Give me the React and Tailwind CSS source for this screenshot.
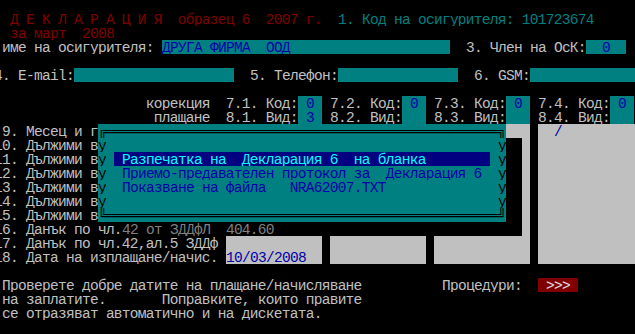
const K = 'bg-black text-[#c0c0c0]';
const R = 'bg-black text-[#800000]';
const T = 'bg-black text-[#008080]';
const F = 'bg-[#008080] text-[#0000a8]';
const G = 'bg-[#c0c0c0] text-[#0000a8]';
const P = 'bg-[#008080] text-black';
const PT = 'bg-[#008080] text-[#0000a8]';
const H = 'bg-[#000080] text-[#00ffff]';
const S = 'bg-black text-[#808080]';
const B = 'bg-[#800000] text-[#e0e0e0]';

const COLS = 81;
const sp = (n) => ' '.repeat(n);

// right side behind the popup: shadow, gray C tail, gap, gray D
const popupRight = [['', K, 2], ['', G, 1], ['', K, 1], ['', G, 13]];

const popupRow = (label, inner) => [[label, K], ['у', P], ...inner, ['у', P], ...popupRight];

const rows = [
  [],
  [['  Д Е К Л А Р А Ц И Я  образец 6  2007 г.  ', R], ['1. Код на осигурителя: 101723674', T]],
  [['  за март  2008', R]],
  [[' име на осигурителя: ', K], ['ДРУГА ФИРМА  ООД', F, 36], ['  3. Член на ОсК:', K], ['  0', F, 5]],
  [],
  [['4. E-mail:', K], ['', F, 20], ['  5. Телефон:', K], ['', F, 15], ['  6. GSM:', K], ['', F, 14]],
  [],
  [
    [sp(19) + 'корекция  7.1. Код:', K], [' 0', F, 3],
    [' 7.2. Код:', K], [' 0', F, 3],
    [' 7.3. Код:', K], [' 0', F, 3],
    [' 7.4. Код:', K], [' 0', F, 3],
  ],
  [
    [sp(20) + 'плащане  8.1. Вид:', K], [' 3', F, 3],
    [' 8.2. Вид:', K], ['', F, 3],
    [' 8.3. Вид:', K], ['', F, 3],
    [' 8.4. Вид:', K], ['', F, 3],
  ],
  [[' 9. Месец и г', K], ['╔' + '═'.repeat(49) + '╗', P], ['', G, 3], ['', K, 1], ['  /', G, 13]],
  popupRow('10. Дължими в', [['', PT, 49]]),
  popupRow('11. Дължими в', [[' ', PT], [' Разпечатка на  Декларация 6  на бланка', H, 47], [' ', PT]]),
  popupRow('12. Дължими в', [['  Приемо-предавателен протокол за  Декларация 6', PT, 49]]),
  popupRow('13. Дължими в', [['  Показване на файла   NRA62007.TXT', PT, 49]]),
  popupRow('14. Дължими в', [['', PT, 49]]),
  [['15. Дължими в', K], ['╚' + '═'.repeat(49) + '╝', P], ...popupRight],
  [['16. Данък по чл.', K], ['42 от ЗДДфЛ  404.60', S, 50], ['', G, 1], ['', K, 1], ['', G, 13]],
  [
    ['17. Данък по чл.42,ал.5 ЗДДф ', K], ['', G, 12], ['', K, 1], ['', G, 12],
    ['', K, 1], ['', G, 12], ['', K, 1], ['', G, 13],
  ],
  [
    ['18. Дата на изплащане/начис. ', K], ['10/03/2008', G, 12], ['', K, 1], ['', G, 12],
    ['', K, 1], ['', G, 12], ['', K, 1], ['', G, 13],
  ],
  [],
  [[' Проверете добре датите на плащане/начисляване', K, 56], ['Процедури:', K, 12], [' >>> ', B]],
  [[' на заплатите.       Поправките, които правите', K]],
  [[' се отразяват автоматично и на дискетата.', K]],
  [],
];

function Cell({ text, cls, width }) {
  return (
    <div
      className={`h-full shrink-0 whitespace-pre pt-[2px] leading-[12px] ${cls}`}
      style={{ width: width * 8 }}
    >
      {text}
    </div>
  );
}

function Row({ segs }) {
  const used = segs.reduce((n, s) => n + (s[2] ?? s[0].length), 0);
  return (
    <div className="flex h-[14px]">
      {segs.map((s, i) => (
        <Cell key={i} text={s[0]} cls={s[1]} width={s[2] ?? s[0].length} />
      ))}
      {used < COLS && <Cell text="" cls={K} width={COLS - used} />}
    </div>
  );
}

export default function App() {
  return (
    <div className="w-[635px] h-[334px] overflow-hidden bg-black">
      <div
        className="w-[648px] -mt-[2px] -ml-[6px] text-[14.5px] tracking-[-0.71px] text-[#c0c0c0]"
        style={{ fontFamily: '"Liberation Mono", "DejaVu Sans Mono", monospace' }}
      >
        {rows.map((segs, i) => (
          <Row key={i} segs={segs} />
        ))}
      </div>
    </div>
  );
}
